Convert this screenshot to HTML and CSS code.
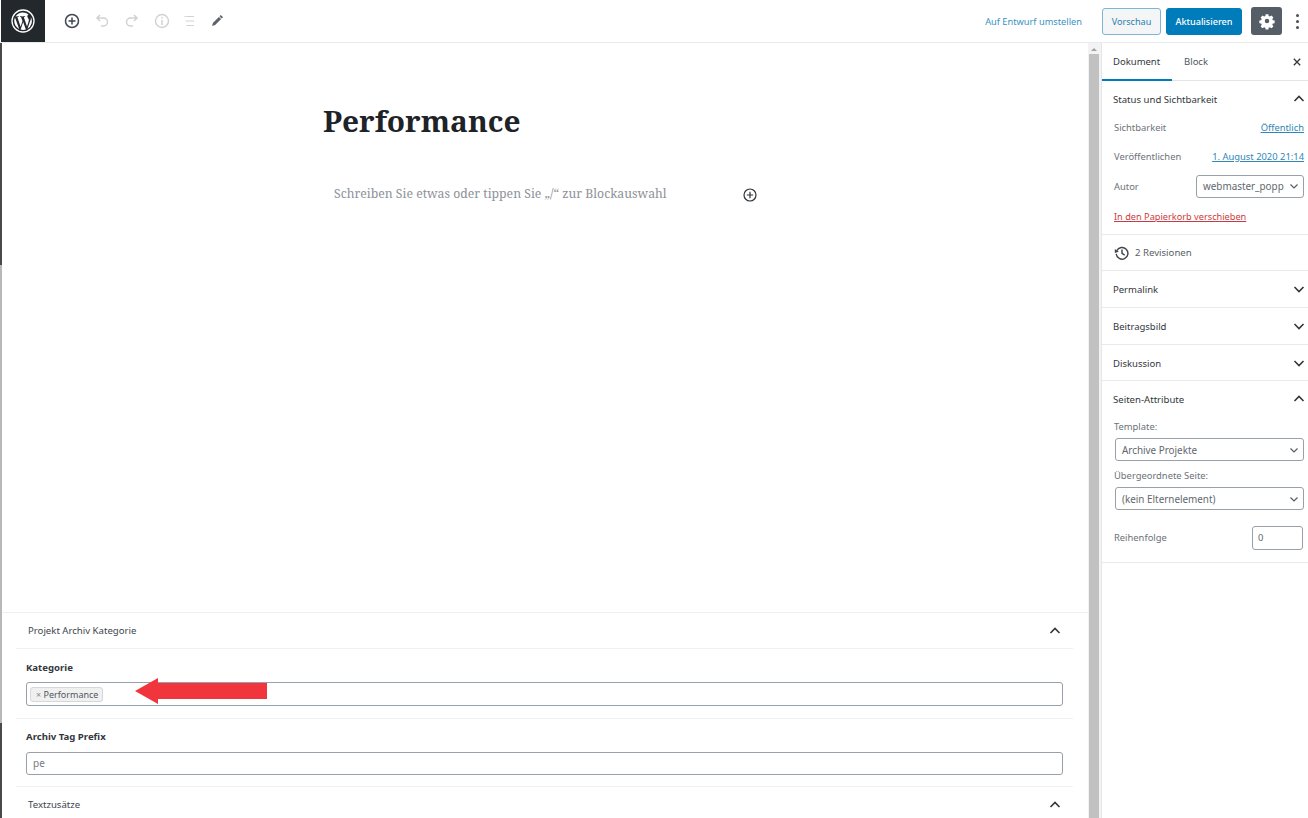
FILE: index.html

```html
<!DOCTYPE html>
<html lang="de">
<head>
  <meta charset="UTF-8">
  <title>Beitrag bearbeiten</title>
  <link rel="stylesheet" href="styles.css">
</head>
<body>
  <header class="topbar">
    <div class="wp-logo">
      <svg viewBox="0 0 24 24" width="24" height="24"><circle cx="12" cy="12" r="11" fill="none" stroke="#fff" stroke-width="1.3"/><path fill="#fff" d="M3.2 12c0 3.5 2 6.5 5 7.9L4 8.4A8.8 8.8 0 0 0 3.2 12zm14.7-.4c0-1.1-.4-1.8-.7-2.4-.5-.7-.9-1.300-.9-2 0-.8.6-1.500 1.400-1.500h.1A8.800 8.800 0 0 0 4.500 7.400h.6c.9 0 2.300-.1 2.300-.1.5 0 .5.7 0 .8 0 0-.5.1-1 .1l3.200 9.500 1.900-5.700-1.400-3.800c-.5 0-.9-.1-.9-.1-.5 0-.4-.8 0-.8 0 0 1.500.1 2.300.1.900 0 2.300-.1 2.300-.1.500 0 .5.700 0 .8 0 0-.5.1-1 .1l3.200 9.400.9-2.900c.4-1.200.7-2 .7-2.700zM12.200 12.900l-2.600 7.700a8.800 8.800 0 0 0 5.400-.1l-.1-.1-2.700-7.500zm7.600-5c0 .3.100.6.100 1 0 .9-.2 1.900-.7 3.100l-2.700 7.700a8.800 8.800 0 0 0 3.300-11.800z"/></svg>
    </div>
    <div class="tools">
      <svg class="icon" viewBox="0 0 20 20"><circle cx="10" cy="10" r="6.500" fill="none" stroke="#3f4750" stroke-width="1.500"/><path stroke="#3f4750" stroke-width="1.500" d="M10 6.500v7M6.500 10h7"/></svg>
      <svg class="icon" viewBox="0 0 20 20"><path fill="none" stroke="#cfd2d4" stroke-width="1.500" d="M8 4 5 7l3 3M5.500 7h6a3.800 3.800 0 0 1 0 8H9"/></svg>
      <svg class="icon" viewBox="0 0 20 20"><path fill="none" stroke="#cfd2d4" stroke-width="1.500" d="M12 4l3 3-3 3M14.500 7h-6a3.800 3.800 0 0 0 0 8H11"/></svg>
      <svg class="icon" viewBox="0 0 20 20"><circle cx="10" cy="10" r="6.500" fill="none" stroke="#cfd2d4" stroke-width="1.400"/><path stroke="#cfd2d4" stroke-width="1.500" d="M10 9v5M10 6v1.500"/></svg>
      <svg class="icon icon-list" viewBox="0 0 20 20"><path stroke="#cfd2d4" stroke-width="1.200" d="M5.500 5.500h1.500M7.500 5.500H15M6.500 10H15M7.500 14.500H15"/></svg>
      <svg class="icon icon-pencil" viewBox="0 0 20 20"><path fill="#5c6269" d="M13.800 4l2.200 2.200-1.300 1.300-2.200-2.200zM11.900 5.900l2.200 2.200-6 6-3 .800.800-3z"/></svg>
    </div>
    <div class="actions">
      <a class="draft-link">Auf Entwurf umstellen</a>
      <button class="btn btn-preview">Vorschau</button>
      <button class="btn btn-update">Aktualisieren</button>
      <button class="btn-settings">
        <svg viewBox="0 0 20 20" width="18" height="18"><path fill="#fff" fill-rule="evenodd" d="M8.500 2.500h3l.4 2 1.300.6 1.800-1.200 2.100 2.100-1.200 1.800.6 1.300 2 .4v3l-2 .4-.6 1.300 1.200 1.800-2.100 2.100-1.800-1.200-1.300.6-.4 2h-3l-.4-2-1.300-.6-1.800 1.200-2.100-2.100 1.200-1.800-.6-1.300-2-.4v-3l2-.4.6-1.300-1.200-1.800 2.100-2.100 1.800 1.200 1.300-.6zM10 7.500a2.500 2.500 0 1 0 0 5 2.500 2.500 0 0 0 0-5z"/></svg>
      </button>
      <div class="more"><i></i><i></i><i></i></div>
    </div>
  </header>

  <div class="workspace">
    <div class="left-edge"></div>
    <main class="editor">
      <div class="canvas">
        <div class="canvas-inner">
          <h1 class="post-title">Performance</h1>
          <div class="placeholder-row">
            <p class="placeholder">Schreiben Sie etwas oder tippen Sie „/“ zur Blockauswahl</p>
            <svg class="inline-add" viewBox="0 0 20 20"><circle cx="10" cy="10" r="7.500" fill="none" stroke="#2c3338" stroke-width="1.500"/><path stroke="#2c3338" stroke-width="1.500" d="M10 6v8M6 10h8"/></svg>
          </div>
        </div>
      </div>
      <div class="metaboxes">
        <div class="metabox-head">
          <span>Projekt Archiv Kategorie</span>
          <svg class="chev" viewBox="0 0 20 20"><path d="M5.500 12l4.500-4.500 4.500 4.500"/></svg>
        </div>
        <div class="field field-tags">
          <label>Kategorie</label>
          <div class="text-box tag-box">
            <span class="tag"><b>×</b> Performance</span>
            <svg class="arrow" viewBox="0 0 132 26" width="132" height="26"><path fill="#f1353d" d="M0 13 23 0v5h109v16H23v5z"/></svg>
          </div>
        </div>
        <div class="field field-prefix">
          <label>Archiv Tag Prefix</label>
          <div class="text-box">pe</div>
        </div>
        <div class="metabox-head">
          <span>Textzusätze</span>
          <svg class="chev" viewBox="0 0 20 20"><path d="M5.500 12l4.500-4.500 4.500 4.500"/></svg>
        </div>
      </div>
    </main>

    <div class="scrollbar">
      <span class="scroll-up"></span>
      <div class="scroll-thumb"></div>
    </div>

    <aside class="sidebar">
      <div class="tabs">
        <span class="tab active">Dokument</span>
        <span class="tab">Block</span>
        <svg class="close" viewBox="0 0 20 20"><path d="M6 6l8 8M14 6l-8 8"/></svg>
      </div>

      <section class="panel status">
        <div class="panel-head">
          <span>Status und Sichtbarkeit</span>
          <svg class="chev" viewBox="0 0 20 20"><path d="M5.500 12l4.500-4.500 4.500 4.500"/></svg>
        </div>
        <div class="row"><span>Sichtbarkeit</span><a>Öffentlich</a></div>
        <div class="row"><span>Veröffentlichen</span><a>1. August 2020 21:14</a></div>
        <div class="row">
          <span>Autor</span>
          <div class="select select-author">webmaster_popp<svg viewBox="0 0 12 12"><path d="M2.500 4.500 6 8l3.500-3.500"/></svg></div>
        </div>
        <a class="trash">In den Papierkorb verschieben</a>
      </section>

      <section class="panel revisions">
        <svg viewBox="0 0 20 20" width="18" height="18"><path fill="none" stroke="#40464d" stroke-width="1.600" d="M4.200 7.500A6.500 6.500 0 1 1 3.600 11M10 6v4.500l3 1.800"/><path fill="#40464d" d="M2 5.500l4.500 3L2 10z"/></svg>
        <span>2 Revisionen</span>
      </section>

      <section class="panel collapsed">
        <span>Permalink</span>
        <svg class="chev" viewBox="0 0 20 20"><path d="M5.500 8l4.500 4.500L14.500 8"/></svg>
      </section>
      <section class="panel collapsed">
        <span>Beitragsbild</span>
        <svg class="chev" viewBox="0 0 20 20"><path d="M5.500 8l4.500 4.500L14.500 8"/></svg>
      </section>
      <section class="panel collapsed last">
        <span>Diskussion</span>
        <svg class="chev" viewBox="0 0 20 20"><path d="M5.500 8l4.500 4.500L14.500 8"/></svg>
      </section>

      <section class="panel attrs">
        <div class="panel-head">
          <span>Seiten-Attribute</span>
          <svg class="chev" viewBox="0 0 20 20"><path d="M5.500 12l4.500-4.500 4.500 4.500"/></svg>
        </div>
        <label class="first">Template:</label>
        <div class="select">Archive Projekte<svg viewBox="0 0 12 12"><path d="M2.500 4.500 6 8l3.500-3.500"/></svg></div>
        <label>Übergeordnete Seite:</label>
        <div class="select">(kein Elternelement)<svg viewBox="0 0 12 12"><path d="M2.500 4.500 6 8l3.500-3.500"/></svg></div>
        <div class="row order">
          <span>Reihenfolge</span>
          <div class="num-box">0</div>
        </div>
      </section>
    </aside>
  </div>
</body>
</html>
```

FILE: styles.css

```css
* {
  box-sizing: border-box;
}
html, body {
  height: 100%;
}
body {
  margin: 0;
  overflow: hidden;
  background: #fff;
  color: #32373c;
  font-family: "Noto Sans", sans-serif;
  font-size: 9.400px;
}
svg {
  display: block;
  flex: none;
}
.chev {
  width: 20px;
  height: 20px;
}
.chev path, .close path {
  fill: none;
  stroke: #32373c;
  stroke-width: 1.600;
}

/* top bar */
.topbar {
  height: 43px;
  display: flex;
  align-items: center;
  border-bottom: 1px solid #e8eaeb;
}
.wp-logo {
  width: 44px;
  height: 42px;
  margin-left: 1px;
  background: #23282d;
  display: flex;
  align-items: center;
  justify-content: center;
}
.tools {
  display: flex;
  gap: 10px;
  margin-left: 17px;
}
.icon {
  width: 20px;
  height: 20px;
}
.icon-list {
  margin-left: -3px;
}
.icon-pencil {
  margin-left: -2px;
}
.actions {
  margin-left: auto;
  display: flex;
  align-items: center;
}
.draft-link {
  color: #3a93c4;
  margin-right: 20px;
  font-size: 9.250px;
}
.btn {
  height: 27px;
  border-radius: 3px;
  font: 9.100px "Noto Sans", sans-serif;
  padding: 0;
}
.btn-preview {
  width: 59px;
  margin-right: 5px;
  background: #f3f5f6;
  border: 1px solid #7fb4d3;
  color: #2b80ad;
}
.btn-update {
  width: 76px;
  margin-right: 9px;
  background: #007cba;
  border: 1px solid #007cba;
  color: #fff;
  font-weight: 500;
}
.btn-settings {
  width: 31px;
  height: 28px;
  padding: 0;
  border: none;
  border-radius: 3px;
  background: #555d66;
  display: flex;
  align-items: center;
  justify-content: center;
}
.more {
  width: 26px;
  display: flex;
  flex-direction: column;
  align-items: center;
  gap: 3px;
  padding-left: 4px;
}
.more i {
  width: 3px;
  height: 3px;
  border-radius: 50%;
  background: #4a5057;
}

/* layout */
.workspace {
  height: 775px;
  display: flex;
}
.left-edge {
  width: 2px;
  flex: none;
  background: linear-gradient(#4a4a4a 222px, #b8b8b8 222px, #b8b8b8 680px, #4a4a4a 680px);
}
.editor {
  width: 1086px;
  display: flex;
  flex-direction: column;
  overflow: hidden;
}
.canvas {
  height: 570px;
  flex: none;
  border-bottom: 1px solid #eeeff0;
}
.canvas-inner {
  width: 426px;
  margin-left: 321px;
}
.post-title {
  margin: 0;
  padding-top: 58px;
  font: bold 29.800px/40px "Noto Serif", "DejaVu Serif", serif;
  color: #1e2327;
}
.placeholder-row {
  display: flex;
  align-items: center;
  justify-content: space-between;
  margin-top: 41px;
  padding-left: 11px;
}
.placeholder {
  margin: 0;
  font: 12.250px/24px "Noto Serif", "DejaVu Serif", serif;
  color: #8d9298;
}
.inline-add {
  width: 16px;
  height: 16px;
  margin-top: 1px;
  margin-right: -9px;
}

/* meta boxes */
.metaboxes {
  padding-left: 14px;
  width: 1071px;
}
.metabox-head {
  height: 36px;
  padding: 0 8px 0 12px;
  display: flex;
  align-items: center;
  justify-content: space-between;
  border-bottom: 1px solid #f0f1f2;
  color: #40464d;
  font-size: 9.600px;
}
.field {
  padding: 11px 10px 12px;
  border-bottom: 1px solid #f0f1f2;
}
.field label {
  display: block;
  height: 14px;
  line-height: 14px;
  margin-bottom: 8px;
  font-weight: 700;
  color: #32373c;
  font-size: 9.600px;
}
.field-tags {
  padding-top: 12px;
}
.field-tags label {
  margin-bottom: 7px;
}
.field-prefix {
  padding-bottom: 11px;
}
.field-prefix .text-box {
  height: 23px;
  line-height: 21px;
}
.text-box {
  height: 24px;
  width: 1037px;
  border: 1px solid #98a0a8;
  border-radius: 3px;
  padding: 0 6px;
  line-height: 22px;
  font-size: 10px;
  color: #777c82;
}
.tag-box {
  position: relative;
  display: flex;
  align-items: center;
  padding: 0 3px;
}
.tag {
  height: 15px;
  line-height: 13px;
  padding: 0 4px 0 5px;
  background: #f0f0f1;
  border: 1px solid #d5d7d9;
  border-radius: 3px;
  font-size: 9px;
  color: #50575e;
}
.tag b {
  font-weight: 400;
  color: #888;
}
.arrow {
  position: absolute;
  left: 108px;
  top: -5px;
}

/* scrollbar */
.scrollbar {
  width: 13px;
  background: #f3f3f3;
  position: relative;
  padding-top: 11px;
  padding-left: 1px;
  padding-right: 2px;
}
.scroll-up {
  position: absolute;
  top: 5px;
  left: 3px;
  border: 3px solid transparent;
  border-top: 0;
  border-bottom: 3px solid #a3a3a3;
}
.scroll-thumb {
  height: 100%;
  background: #c1c1c1;
}

/* sidebar */
.sidebar {
  width: 207px;
  border-left: 1px solid #e4e6e7;
  color: #40464d;
}
.tabs {
  height: 38px;
  display: flex;
  align-items: center;
  border-bottom: 1px solid #e2e4e7;
}
.tab {
  height: 38px;
  line-height: 37px;
  padding: 0 12px;
  color: #50575e;
  font-size: 9.500px;
}
.tab.active {
  width: 70px;
  padding-left: 11px;
  color: #32373c;
  border-bottom: 2px solid #007cba;
}
.close {
  width: 16px;
  height: 16px;
  margin-left: auto;
  margin-right: 3px;
}
.panel {
  border-bottom: 1px solid #e8e9eb;
  padding: 0 4px 0 11px;
}
.panel .chev {
  margin-right: -5px;
}
.panel-head {
  height: 26.500px;
  margin-top: 5px;
  display: flex;
  align-items: center;
  justify-content: space-between;
  color: #32373c;
  font-size: 9.600px;
}
.row {
  display: flex;
  align-items: center;
  justify-content: space-between;
  height: 29.500px;
  padding-left: 1px;
  color: #6c7278;
}
.row a {
  color: #2f87b8;
  text-decoration: underline;
}
.status {
  height: 154px;
  overflow: hidden;
}
.select {
  height: 23px;
  border: 1px solid #98a0a8;
  border-radius: 3px;
  display: flex;
  align-items: center;
  justify-content: space-between;
  padding: 0 3px 0 6px;
  color: #61676e;
  font-size: 9.900px;
}
.select svg {
  width: 12px;
  height: 12px;
}
.select path {
  fill: none;
  stroke: #555d66;
  stroke-width: 1.200;
}
.select-author {
  width: 108px;
}
.trash {
  display: block;
  margin: 8.500px 0 0 1px;
  line-height: 14px;
  color: #cc3a3f;
  text-decoration: underline;
  font-size: 9.200px;
}
.revisions {
  height: 36px;
  display: flex;
  align-items: center;
  gap: 4px;
  color: #5a6067;
  font-size: 9.600px;
}
.collapsed {
  height: 37px;
  display: flex;
  align-items: center;
  justify-content: space-between;
  color: #32373c;
  font-size: 9.500px;
}
.collapsed.last {
  height: 36px;
  padding-top: 1px;
}
.attrs {
  height: 182px;
  overflow: hidden;
}
.attrs label {
  display: block;
  height: 14px;
  line-height: 14px;
  margin: 0 0 4px 1px;
  color: #6c7278;
}
.attrs label.first {
  margin-top: 7.500px;
}
.attrs .select {
  width: 189px;
  margin-left: 2px;
  margin-bottom: 8px;
}
.order {
  margin-top: 15.500px;
  height: 24px;
}
.num-box {
  width: 51px;
  height: 24px;
  margin-right: 1px;
  border: 1px solid #98a0a8;
  border-radius: 3px;
  padding-left: 5px;
  line-height: 22px;
  color: #61676e;
}
```
